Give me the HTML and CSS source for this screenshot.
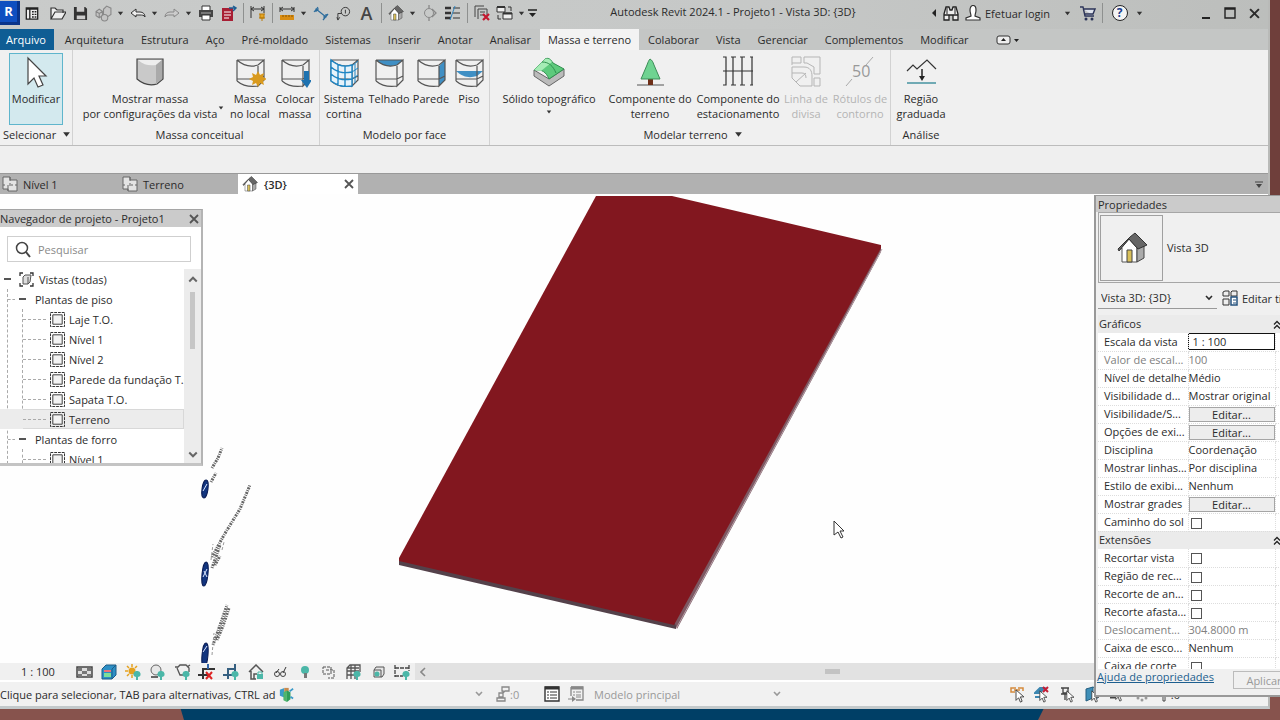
FILE: index.html
```html
<!DOCTYPE html>
<html lang="pt-BR">
<head>
<meta charset="utf-8">
<title>Autodesk Revit 2024.1 - Projeto1 - Vista 3D: {3D}</title>
<link rel="stylesheet" href="styles.css">
</head>
<body>
<svg width="0" height="0" class="defs" aria-hidden="true">
  <symbol id="caret" viewBox="0 0 8 8"><path d="M1 2h6L4 6z" fill="#333"/></symbol>
  <symbol id="chev" viewBox="0 0 8 8"><path d="M1 2l3 3 3-3" fill="none" stroke="currentColor" stroke-width="1.6"/></symbol>
  <symbol id="close" viewBox="0 0 10 10"><path d="M1 1l8 8M9 1L1 9" fill="none" stroke="currentColor" stroke-width="1.8"/></symbol>
  <symbol id="dblup" viewBox="0 0 8 8"><path d="M1 4l3-3 3 3M1 8l3-3 3 3" fill="none" stroke="#222" stroke-width="1.3"/></symbol>
  <symbol id="house" viewBox="0 0 32 32">
    <path d="M4 17L13 7l8 9v14H6V16z" fill="#fff" stroke="#555"/>
    <path d="M21 16l7-2v12l-7 4z" fill="#aaa" stroke="#444"/>
    <path d="M2 17L14 5l5-4 12 12-9 4-9-10L3 19z" fill="#666" stroke="#333"/>
    <path d="M11 18h5v12h-5z" fill="#d9c05a" stroke="#444"/>
  </symbol>
  <symbol id="plan" viewBox="0 0 16 16">
    <path d="M.5 .5h15v15H.5z" fill="none" stroke="#222" stroke-dasharray="3 1"/>
    <path d="M3 3h10v10H3z" fill="#f4f4f4" stroke="#333"/>
  </symbol>
  <symbol id="sheet" viewBox="0 0 16 16">
    <path d="M1 1h7v3h7v11H6v-2H1z" fill="#e4e4e4" stroke="#666"/>
    <path d="M8 1v4M8 7v3M1 9h2M6 9v6M9 9h2M13 9h2" fill="none" stroke="#666"/>
  </symbol>
  <symbol id="ptr" viewBox="0 0 10 16"><path d="M1 1v12l3-3 2 5 2-1-2-5h4z" fill="#fff" stroke="#333"/></symbol>
  <symbol id="mass" viewBox="0 0 32 32">
    <path d="M3 4h27M3 4v21M3 4c8 7 15 7 21 5l6-5v20l-6 6V10M3 25c7 6 14 6 21 5M3 23h21l6-3" fill="none" stroke="#555" stroke-width="1.2"/>
  </symbol>
</svg>

<svg class="desktop" viewBox="0 0 1280 720" preserveAspectRatio="none" aria-hidden="true">
  <path d="M0 0h1280v720H0z" fill="#87534d"/><path d="M1260 0h20v200h-20z" fill="#6f3f3b"/>
  <path d="M178 700h870l-10 20H184z" fill="#003f66"/>
</svg>

<div class="app">
  <header class="titlebar">
    <button class="logo" aria-label="Revit">R</button>
    <button class="tool first" aria-label="Início"><svg width="14" height="15" viewBox="0 0 16 16"><path d="M1.500 1.500h13v13h-13zM1 3h14M5.500 3v12" fill="#eee" stroke="#222" stroke-width="1.500"/><path d="M8 6h2M11 6h2M8 9h2M11 9h2M8 12h2M11 12h2" stroke="#222" stroke-width="1.500"/></svg></button>
    <button class="tool" aria-label="Abrir"><svg width="16" height="16" viewBox="0 0 16 16"><path d="M1 14V3h4l2 2h6v3M1 14L5 7h11l-4 7z" fill="#eee" stroke="#333" stroke-width="1.200"/></svg></button>
    <button class="tool" aria-label="Salvar"><svg width="15" height="15" viewBox="0 0 16 16"><path d="M1 1h12l2 2v12H1z" fill="#333"/><path d="M4 1h8v5H4zM4 10h9v4H4z" fill="#ccc"/></svg></button>
    <button class="tool" aria-label="Sincronizar"><svg width="17" height="17" viewBox="0 0 16 16"><g fill="#c4c4c4" stroke="#888"><path d="M1 6l3-2 3 2v4l-3 2-3-2zM1 6l3 2 3-2M4 8v4"/><path d="M8 4l3-3 4 2v6l-3 2-4-2z"/><circle cx="9" cy="12" r="3"/></g></svg></button>
    <button class="more" aria-label="Mais"><svg width="7" height="7"><use href="#caret"/></svg></button>
    <button class="tool" aria-label="Desfazer"><svg width="16" height="16" viewBox="0 0 16 16"><path d="M1 8l5-4v3h4c3 0 5 2 5 5-1-2-3-2-5-2H6v2z" fill="#eee" stroke="#333"/></svg></button>
    <button class="more" aria-label="Mais"><svg width="7" height="7"><use href="#caret"/></svg></button>
    <button class="tool" aria-label="Refazer"><svg width="16" height="16" viewBox="0 0 16 16"><path d="M15 8l-5-4v3H6c-3 0-5 2-5 5 1-2 3-2 5-2h4v2z" fill="#ccc" stroke="#888"/></svg></button>
    <button class="more" aria-label="Mais"><svg width="7" height="7"><use href="#caret"/></svg></button>
    <button class="tool" aria-label="Imprimir"><svg width="16" height="16" viewBox="0 0 16 16"><path d="M4 5V1h8v4" fill="#fff" stroke="#333"/><path d="M1 5h14v7H1z" fill="#444"/><path d="M3 8h10" stroke="#aaa"/><path d="M4 10h8v5H4z" fill="#fff" stroke="#333"/></svg></button>
    <button class="tool" aria-label="Exportar PDF"><svg width="16" height="16" viewBox="0 0 16 16"><path d="M1 3h11v13H1z" fill="#a81e34"/><path d="M3 7h7M3 10h7M3 13h5" stroke="#fff"/><path d="M8 3h6M12 1l3 2-3 3" fill="none" stroke="#1d5e94" stroke-width="1.500"/></svg></button>
    <span class="sep"></span>
    <button class="tool" aria-label="Cota"><svg width="16" height="16" viewBox="0 0 16 16"><path d="M1 1v12M14 1v7M1 4h13M4 2L1 4l3 2M11 2l3 2-3 2" fill="none" stroke="#333"/><path d="M9 9h6M10 9v4h4V9M12 13v3M9 13h6" fill="#e6a623" stroke="#b97a08"/></svg></button>
    <span class="sep"></span>
    <button class="tool" aria-label="Medir"><svg width="16" height="16" viewBox="0 0 16 16"><path d="M1 2v5M15 2v5M1 4h14M4 2L1 4l3 2M12 2l3 2-3 2" fill="none" stroke="#333"/><path d="M1 10h14v5H1z" fill="#d98d12"/><path d="M4 10v2M7 10v2M10 10v2M13 10v2" stroke="#8a5600"/></svg></button>
    <button class="more" aria-label="Mais"><svg width="7" height="7"><use href="#caret"/></svg></button>
    <button class="tool" aria-label="Cota alinhada"><svg width="16" height="16" viewBox="0 0 16 16"><path d="M3 4l10 8M1 7l4-5M10 15l5-6M3 7V4h3M10 12h3V9" fill="none" stroke="#2c6c9c" stroke-width="1.200"/></svg></button>
    <button class="tool" aria-label="Identificador"><svg width="15" height="15" viewBox="0 0 16 16"><circle cx="10" cy="6" r="4.500" fill="none" stroke="#333"/><path d="M10 4v4M6 8H2v6M1 12l1 3 2-3" fill="none" stroke="#333"/></svg></button>
    <button class="tool letter" aria-label="Texto">A</button>
    <span class="sep"></span>
    <button class="tool" aria-label="Vista 3D"><svg width="16" height="16"><use href="#house"/></svg></button>
    <button class="more" aria-label="Mais"><svg width="7" height="7"><use href="#caret"/></svg></button>
    <button class="tool" aria-label="Corte"><svg width="14" height="16" viewBox="0 0 14 16"><circle cx="6" cy="8" r="4.500" fill="none" stroke="#888"/><path d="M6 0v3M6 13v3M9 4l4 4-4 4" fill="none" stroke="#888" stroke-width="1.300"/></svg></button>
    <button class="tool" aria-label="Linhas finas"><svg width="17" height="16" viewBox="0 0 17 16"><path d="M1 3h6M1 8h6M1 13h6" stroke="#333" stroke-width="2.500"/><path d="M9 3h7M9 8h7M9 13h7" stroke="#333"/><path d="M11 1L6 15" stroke="#2f83bd"/></svg></button>
    <span class="sep"></span>
    <button class="tool" aria-label="Fechar ocultas"><svg width="16" height="16" viewBox="0 0 16 16"><path d="M1 12V1h9M4 14V4h9v6M6 7h5M6 10h4" fill="none" stroke="#444"/><path d="M9 9l6 6M15 9l-6 6" stroke="#c3182f" stroke-width="2.200"/></svg></button>
    <button class="tool" aria-label="Alternar janelas"><svg width="17" height="16" viewBox="0 0 17 16"><path d="M1 2h8v5H1zM7 8h9v6H7z" fill="#eee" stroke="#333"/><path d="M1 2h8M7 8.500h9" stroke="#333" stroke-width="2"/><path d="M12 2h3v4M2 10v4h3" fill="none" stroke="#333"/></svg></button>
    <button class="more" aria-label="Mais"><svg width="7" height="7"><use href="#caret"/></svg></button>
    <button class="more" aria-label="Personalizar"><svg width="9" height="8" viewBox="0 0 9 8"><path d="M0 1h9" stroke="#222" stroke-width="1.500"/><path d="M1 4h7L4.500 8z" fill="#222"/></svg></button>
    <h1>Autodesk Revit 2024.1 - Projeto1 - Vista 3D: {3D}</h1>
    <div class="account">
      <button class="more" aria-label="Recolher"><svg width="6" height="8" viewBox="0 0 6 8"><path d="M5 0v8L1 4z" fill="#222"/></svg></button>
      <button class="tool" aria-label="Pesquisar"><svg width="16" height="16" viewBox="0 0 16 16"><path d="M1 9l2-7h3l1 3h2l1-3h3l2 7v6h-5v-5H6v5H1zM1 10h5M10 10h5" fill="#eee" stroke="#222" stroke-width="1.300"/><path d="M4 3v6M12 3v6" stroke="#222"/></svg></button>
      <button class="login"><svg width="16" height="16" viewBox="0 0 16 16"><path d="M5 5c0-6 6-6 6 0 0 3-1 4-1 6l5 2v2H1v-2l5-2C6 9 5 8 5 5z" fill="#fff" stroke="#333" stroke-width="1.200"/></svg>Efetuar login</button>
      <button class="more gap" aria-label="Mais"><svg width="7" height="7"><use href="#caret"/></svg></button>
      <button class="tool" aria-label="Loja"><svg width="16" height="16" viewBox="0 0 16 16"><path d="M0 2h3l2 9h9M4 4h11l-2 5H5" fill="#dfe3ee" stroke="#2b3357" stroke-width="1.400"/><circle cx="6" cy="14" r="1.500" fill="#2b3357"/><circle cx="12" cy="14" r="1.500" fill="#2b3357"/></svg></button>
      <span class="sep"></span>
      <button class="tool help" aria-label="Ajuda"><span>?</span></button>
      <button class="more" aria-label="Mais"><svg width="7" height="7"><use href="#caret"/></svg></button>
    </div>
    <div class="wincontrols">
      <button aria-label="Minimizar"><svg width="12" height="12" viewBox="0 0 12 12"><path d="M2 11h8" stroke="#222" stroke-width="2"/></svg></button>
      <button aria-label="Maximizar"><svg width="12" height="12" viewBox="0 0 12 12"><path d="M1 1h10v10H1zM1 2h10" fill="none" stroke="#222" stroke-width="1.400"/></svg></button>
      <button aria-label="Fechar"><svg width="11" height="11"><use href="#close"/></svg></button>
    </div>
  </header>

  <nav class="tabs">
    <button class="file">Arquivo</button>
    <button>Arquitetura</button><button>Estrutura</button><button>Aço</button><button>Pré-moldado</button><button>Sistemas</button><button>Inserir</button><button>Anotar</button><button>Analisar</button>
    <button class="active">Massa e terreno</button>
    <button>Colaborar</button><button>Vista</button><button>Gerenciar</button><button>Complementos</button><button>Modificar</button>
    <button class="toggle" aria-label="Minimizar faixa"><svg width="24" height="10" viewBox="0 0 24 10"><rect x="1" y="1" width="13" height="8" rx="2" fill="#eee" stroke="#333"/><path d="M5 6h5L7.500 3zM18 4h5l-2.500 3z" fill="#222"/></svg></button>
  </nav>

  <section class="ribbon">
    <div class="panel p-select">
      <div class="cmds"><button class="cmd on"><svg width="32" height="32" viewBox="0 0 32 32"><path d="M8 2v26l6-6 4 9 5-2-4-9h7z" fill="#fff" stroke="#444" stroke-width="1.200"/></svg><span>Modificar</span></button></div>
      <div class="name">Selecionar <svg width="9" height="9"><use href="#caret"/></svg></div>
    </div>
    <div class="panel p-mass">
      <div class="cmds">
        <button class="cmd"><svg width="32" height="32" viewBox="0 0 32 32"><path d="M3 3h26v20l-6 5c-7 2-13 1-20-5z" fill="#c9c9c9" stroke="#444" stroke-width="1.200"/><path d="M4 4h24l-6 5c-7 1-12 0-18-5z" fill="#eee"/><path d="M22 9v19l6-5V4z" fill="#aaa"/></svg><span>Mostrar massa<br>por configurações da vista</span><svg class="drop" width="6" height="6"><use href="#caret"/></svg></button>
        <button class="cmd"><svg width="32" height="32" viewBox="0 0 32 32"><use href="#mass" width="32" height="32"/><path d="M24 15l2 4 4-2-1 4 4 2-4 2 1 4-4-2-2 4-2-4-4 2 1-4-4-2 4-2-1-4 4 2z" fill="#d99a1e"/></svg><span>Massa<br>no local</span></button>
        <button class="cmd"><svg width="32" height="32" viewBox="0 0 32 32"><use href="#mass" width="32" height="32"/><path d="M25 15h5v9h3l-5 8-6-8h3z" fill="#1d72b0"/></svg><span>Colocar<br>massa</span></button>
      </div>
      <div class="name">Massa conceitual</div>
    </div>
    <div class="panel p-face">
      <div class="cmds">
        <button class="cmd"><svg width="32" height="32" viewBox="0 0 32 32"><use href="#mass" width="32" height="32"/><path d="M3 4c8 7 15 7 21 5v21c-9 1-14 0-21-5zM3 11c8 7 15 6 21 5M3 18c8 7 15 6 21 5M10 8v21M17 10v20" fill="#e6f3fb" stroke="#1e86c4" stroke-width="1.400"/><path d="M24 10l6-5M24 16l6-4M24 23l6-4M27 8v19" stroke="#1e86c4"/></svg><span>Sistema<br>cortina</span></button>
        <button class="cmd"><svg width="32" height="32" viewBox="0 0 32 32"><path d="M3 4h27l-6 5c-7 2-13 2-21-5z" fill="#3f8fc4"/><use href="#mass" width="32" height="32"/></svg><span>Telhado</span></button>
        <button class="cmd"><svg width="32" height="32" viewBox="0 0 32 32"><path d="M24 10l6-6v20l-6 6z" fill="#3f8fc4"/><use href="#mass" width="32" height="32"/></svg><span>Parede</span></button>
        <button class="cmd"><svg width="32" height="32" viewBox="0 0 32 32"><path d="M3 15h27l-6 5c-7 2-13 2-21-5z" fill="#3f8fc4"/><use href="#mass" width="32" height="32"/></svg><span>Piso</span></button>
      </div>
      <div class="name">Modelo por face</div>
    </div>
    <div class="panel p-site">
      <div class="cmds">
        <button class="cmd"><svg width="32" height="32" viewBox="0 0 32 32"><path d="M1 14l15 9 15-10v7L16 30 1 20z" fill="#bbb" stroke="#666"/><path d="M1 14L12 3c4-2 6 1 8 4l11 6-15 10c-3-7-7-10-15-9z" fill="#5dca7c" stroke="#2f8f4e"/><path d="M1 14L12 3c3-1 5 0 7 3L8 15z" fill="#a5ecb5"/><path d="M9 6c7 0 11 4 14 11" fill="none" stroke="#2f8f4e"/></svg><span>Sólido topográfico</span><svg class="under" width="6" height="6"><use href="#caret"/></svg></button>
        <button class="cmd"><svg width="32" height="32" viewBox="0 0 32 32"><path d="M3 29h27" stroke="#555"/><path d="M14 22h5v7h-5z" fill="#6e2f18"/><path d="M16 3c2 1 3 3 4 6l6 14H7l6-14c1-3 2-5 3-6z" fill="#6fd391" stroke="#3d8d58"/></svg><span>Componente do<br>terreno</span></button>
        <button class="cmd"><svg width="32" height="32" viewBox="0 0 32 32"><path d="M1 15h30M1 1h3v28H1M9 1h5M11 1v28M9 29h5M18 1h5M20 1v28M18 29h5M31 1h-3M31 29h-3M30 1v28" fill="none" stroke="#333" stroke-width="1.200"/></svg><span>Componente do<br>estacionamento</span></button>
        <button class="cmd" disabled><svg width="32" height="32" viewBox="0 0 32 32"><path d="M2 9V1h9v6H2M14 1h16v17h-6V11L17 7h-3zM2 11h12c6 0 8 4 8 9v10H10L2 22zM2 17h10c3 0 4 2 4 5M6 26l10-9M24 22h6v8h-6z" fill="none" stroke="#b5b5b5"/></svg><span>Linha de<br>divisa</span></button>
        <button class="cmd" disabled><svg width="32" height="32" viewBox="0 0 32 32"><path d="M2 30l6-7M22 9l7-8" stroke="#aaa"/><text x="8" y="21" class="fifty">50</text></svg><span>Rótulos de<br>contorno</span></button>
      </div>
      <div class="name">Modelar terreno <svg width="9" height="9"><use href="#caret"/></svg></div>
    </div>
    <div class="panel p-analysis">
      <div class="cmds"><button class="cmd"><svg width="32" height="32" viewBox="0 0 32 32"><path d="M2 15l6-6 4 4L22 4l9 9" fill="none" stroke="#333" stroke-width="1.200"/><path d="M17 13v9" stroke="#222" stroke-width="1.500"/><path d="M14 20h6l-3 5z" fill="#222"/><path d="M2 27h29" stroke="#2b8494" stroke-width="1.300"/></svg><span>Região<br>graduada</span></button></div>
      <div class="name">Análise</div>
    </div>
  </section>

  <div class="options"></div>

  <div class="viewtabs">
    <button><svg width="16" height="16"><use href="#sheet"/></svg>Nível 1</button>
    <button><svg width="16" height="16"><use href="#sheet"/></svg>Terreno</button>
    <button class="active"><svg width="16" height="16"><use href="#house"/></svg>{3D}<svg class="x" width="10" height="10"><use href="#close"/></svg></button>
    <span class="listmenu"><svg width="8" height="7" viewBox="0 0 8 7"><path d="M0 1h8" stroke="#444"/><path d="M1 3h6L4 7z" fill="#444"/></svg></span>
  </div>

  <main class="canvas">
    <svg width="1095" height="469" viewBox="0 194 1095 469">
      <path d="M399 558L676 622v7L399 565z" fill="#54414a"/>
      <path d="M881 245v7L677 629l-3-8z" fill="#7d5862"/>
      <path d="M882 249L677 627" stroke="#b6a0a8" stroke-width="1"/>
      <path d="M596 196h76L881 245v3L674 625 399 561v-3z" fill="#82171f"/>
      <g fill="#12357f" stroke="#0a1c55">
        <ellipse cx="205" cy="489" rx="3" ry="9" transform="rotate(8 205 489)"/>
        <ellipse cx="205" cy="574" rx="3" ry="12" transform="rotate(6 205 574)"/>
        <ellipse cx="205" cy="655" rx="3" ry="12" transform="rotate(5 205 655)"/>
      </g>
      <path d="M203 491l4-7M203 577l4-8M204 571l3 6M203 652l4-6" stroke="#dfe8ff"/>
      <g fill="none" stroke="#666" stroke-width="3" stroke-dasharray="1 1 2 1">
        <path d="M212 468l6-10 4-10M211 482l5-9M212 557l12-22 16-26 10-24M212 568l5-14 3-9M215 565l5-9M213 645l5-14 9-26M217 640l6-14 6-18"/>
      </g>
      <path d="M211 560l2-16M212 655l2-22M222 550l2-8" stroke="#999" stroke-dasharray="3 2"/>
      <path d="M834 521v14l4-3 3 6 2-1-3-6h4z" fill="#fff" stroke="#333"/>
    </svg>
  </main>

  <div class="viewbar">
    <span class="scale">1 : 100</span>
    <div class="viewicons">
      <svg width="17" height="16" viewBox="0 0 17 16"><path d="M1 3h15v10H1z" fill="#ddd" stroke="#444" stroke-width="1.500"/><path d="M2 4h4v3H2zM11 4h4v3h-4zM6 7h5v3H6zM2 10h4v3H2zM11 10h4v3h-4z" fill="#777"/></svg>
      <svg width="16" height="16" viewBox="0 0 16 16"><path d="M1 5l4-4h10v10l-4 4H1z" fill="#2d8fc5" stroke="#1c5c87"/><path d="M3 6h7v2H3z" fill="#f07078"/><path d="M3 9h7v4H3z" fill="#7ddf9a"/><path d="M11 5l4-4M11 5v10" stroke="#1c5c87"/></svg>
      <svg width="17" height="16" viewBox="0 0 17 16"><circle cx="7" cy="7" r="3.500" fill="#e5a11e"/><path d="M7 0v3M7 11v3M0 7h3M2 2l2 2M12 2l-2 2M2 12l2-2" stroke="#e5a11e" stroke-width="1.500"/><path d="M12 7a3 3 0 0 1 1 6v3h-2v-3a3 3 0 0 1 1-6z" fill="#4bb7a8"/></svg>
      <svg width="17" height="16" viewBox="0 0 17 16"><circle cx="7" cy="6" r="5" fill="#e8e8e8" stroke="#666"/><path d="M2 13h7" stroke="#666" stroke-width="2"/><path d="M12 7a3 3 0 0 1 1 6v3h-2v-3a3 3 0 0 1 1-6z" fill="#4bb7a8"/></svg>
      <svg width="17" height="16" viewBox="0 0 17 16"><path d="M1 3h3l2-2h6l3 3v4M3 4l3 7h5M13 3l3-2" fill="none" stroke="#555" stroke-width="1.300"/><path d="M12 7a3 3 0 0 1 1 6v3h-2v-3a3 3 0 0 1 1-6z" fill="#4bb7a8"/></svg>
      <svg width="17" height="16" viewBox="0 0 17 16"><path d="M5 15V5h12M0 11h10" fill="none" stroke="#333" stroke-width="2"/><path d="M10 0v5" stroke="#36a" stroke-width="2"/><path d="M8 8l6 7M14 8l-6 7" stroke="#d22" stroke-width="2"/></svg>
      <svg width="17" height="16" viewBox="0 0 17 16"><path d="M5 15V5h8M0 11h9M12 0v12" fill="none" stroke="#355f80" stroke-width="2"/><path d="M12 7a3 3 0 0 1 1 6v3h-2v-3a3 3 0 0 1 1-6z" fill="#4bb7a8"/></svg>
      <svg width="16" height="16" viewBox="0 0 16 16"><path d="M1 8l7-7 7 7M3 7v8h5M6 15v-5h3" fill="none" stroke="#555" stroke-width="1.500"/><path d="M9 10h6v5H9z" fill="#4bb7a8"/><path d="M10 10V8h4v2" fill="none" stroke="#4bb7a8"/></svg>
      <svg width="15" height="14" viewBox="0 0 15 14"><path d="M6 4L3 8M13 2l-3 6" stroke="#333"/><circle cx="4" cy="9" r="2.500" fill="none" stroke="#444"/><circle cx="10" cy="9" r="2.500" fill="none" stroke="#444"/></svg>
      <svg width="10" height="14" viewBox="0 0 10 14"><circle cx="5" cy="5" r="4" fill="#4bb7a8"/><path d="M4 8h3v5H4z" fill="#777"/></svg>
      <svg width="14" height="14" viewBox="0 0 14 14"><path d="M1 2h8v7H1zM4 5h8v8H6" fill="none" stroke="#555" stroke-dasharray="3 1"/></svg>
      <svg width="17" height="16" viewBox="0 0 17 16"><path d="M2 15V4l3-3h10v7M2 7h12M2 11h8M6 1v14M10 1v14M2 4h12" fill="none" stroke="#555" stroke-width="1.300"/><path d="M12 7a3 3 0 0 1 1 6v3h-2v-3a3 3 0 0 1 1-6z" fill="#4bb7a8"/></svg>
      <svg width="14" height="14" viewBox="0 0 14 14"><path d="M3 5l2-3h8v7l-2 3H3zM10 5V12M3 5h7" fill="#e6e6e6" stroke="#555"/><circle cx="6" cy="9" r="2.500" fill="#4bb7a8"/></svg>
      <svg width="17" height="16" viewBox="0 0 17 16"><path d="M1 1v12M15 1v6M1 4h14M1 12h8" fill="none" stroke="#444" stroke-width="1.300" stroke-dasharray="4 1"/><path d="M12 7a3 3 0 0 1 1 6v3h-2v-3a3 3 0 0 1 1-6z" fill="#4bb7a8"/></svg>
    </div>
    <div class="hscroll"><svg width="6" height="10" viewBox="0 0 6 10"><path d="M5 1L1 5l4 4" fill="none" stroke="#888" stroke-width="1.600"/></svg><span class="hthumb"></span></div>
  </div>

  <footer class="status">
    <div class="prompt"><span>Clique para selecionar, TAB para alternativas, CTRL ad</span>
    <svg width="15" height="17" viewBox="0 0 17 17"><path d="M1 3l5-2v11l-5-2z" fill="#3c9bc9"/><path d="M6 1h5v6H6z" fill="#c98a4d"/><path d="M5 6l4-2v13l-4-2z" fill="#4fb56d"/><path d="M9 4l4 2v8l-4 3z" fill="#2f9e59"/><path d="M12 5l4-3M13 11l3 2" stroke="#3c9bc9" stroke-width="2"/></svg></div>
    <label class="pick ws"><select aria-label="Workset ativo"><option></option></select><svg width="8" height="8"><use href="#chev"/></svg></label>
    <svg class="req" width="14" height="16" viewBox="0 0 14 16"><path d="M6 1h7v4H9L7 7V5H6zM3 7h4v4H3zM1 15v-3h8v3z" fill="none" stroke="#888" stroke-width="1.300"/></svg><span class="grey">:0</span>
    <svg class="doc" width="16" height="16" viewBox="0 0 16 16"><path d="M1 1h14v14H1z" fill="#fff" stroke="#333" stroke-width="1.400"/><path d="M1 2h14" stroke="#333" stroke-width="3"/><path d="M3 6h2M3 9h2M3 12h2M6 6h7M6 9h7M6 12h7" stroke="#333"/></svg>
    <svg class="doc2" width="16" height="16" viewBox="0 0 16 16"><path d="M3 1h12v13H8M3 1v9" fill="none" stroke="#888" stroke-width="1.300"/><path d="M3 2h12" stroke="#888" stroke-width="3"/><path d="M5 6h2M8 6h5M5 9h2M8 9h5M8 11h5M0 13h5" stroke="#888"/><path d="M4 10v6l4-3z" fill="#888"/></svg>
    <label class="pick model"><select aria-label="Opção de projeto"><option>Modelo principal</option></select><svg width="8" height="8"><use href="#chev"/></svg></label>
    <div class="selection">
      <svg width="16" height="18" viewBox="0 0 16 18"><path d="M7 3H2v4h4M9 3h5v3M5 5h6" fill="none" stroke="#d58a3c" stroke-width="1.500"/><use href="#ptr" x="6" y="4" width="9" height="14"/></svg>
      <svg width="16" height="18" viewBox="0 0 16 18"><path d="M1 8l5-5h4L6 8zM1 12h6" fill="#3c86b0" stroke="#3c86b0" stroke-width="2"/><path d="M9 2l5 5M14 2L9 7" stroke="#c41e35" stroke-width="2"/><use href="#ptr" x="5" y="5" width="8" height="13"/></svg>
      <svg width="16" height="18" viewBox="0 0 16 18"><path d="M2 3h8M4 3v5h5V3M2 9h8M6 9v6" fill="none" stroke="#444" stroke-width="1.300"/><use href="#ptr" x="7" y="5" width="8" height="13"/></svg>
      <svg width="16" height="18" viewBox="0 0 16 18"><path d="M2 4l7-2v11l-7 3z" fill="#3f8fb8" stroke="#245f80"/><path d="M9 2l4 2v10" fill="none" stroke="#245f80"/><use href="#ptr" x="7" y="5" width="8" height="13"/></svg>
      <svg width="16" height="18" viewBox="0 0 16 18"><path d="M1 12h7" stroke="#444" stroke-width="3"/><use href="#ptr" x="6" y="4" width="8" height="13"/></svg>
      <svg width="16" height="18" viewBox="0 0 16 18"><circle cx="4" cy="13" r="1.500" fill="#999"/><circle cx="8" cy="15" r="1.500" fill="#999"/><circle cx="12" cy="13" r="1.500" fill="#999"/></svg>
      <svg width="10" height="18" viewBox="0 0 10 18"><path d="M2 3h6L6 8v8H4V8z" fill="#fff" stroke="#444"/></svg><span>:0</span>
    </div>
  </footer>
</div>

<aside class="browser">
  <div class="phead">Navegador de projeto - Projeto1<button aria-label="Fechar"><svg width="10" height="10"><use href="#close"/></svg></button></div>
  <label class="search"><svg width="16" height="17" viewBox="0 0 16 17"><circle cx="7" cy="7" r="5.500" fill="none" stroke="#444" stroke-width="1.500"/><path d="M11 11l4 5" stroke="#444" stroke-width="2"/></svg><input type="text" placeholder="Pesquisar" aria-label="Pesquisar"></label>
  <div class="treewrap">
    <div class="tree">
      <div class="row root"><i></i><svg width="15" height="15" viewBox="0 0 15 15"><path d="M1 4V1h3M11 1h3v3M1 11v3h3M11 14h3v-3" fill="none" stroke="#333" stroke-width="1.300"/><path d="M4 5l2-2h6l-1 7-2 2H4zM9 5v7" fill="#ddd" stroke="#555"/></svg>Vistas (todas)</div>
      <ul>
        <li class="row branch"><i></i>Plantas de piso</li>
        <li><ul>
          <li class="row leaf"><svg width="15" height="15"><use href="#plan"/></svg>Laje T.O.</li>
          <li class="row leaf"><svg width="15" height="15"><use href="#plan"/></svg>Nível 1</li>
          <li class="row leaf"><svg width="15" height="15"><use href="#plan"/></svg>Nível 2</li>
          <li class="row leaf"><svg width="15" height="15"><use href="#plan"/></svg>Parede da fundação T.O.</li>
          <li class="row leaf"><svg width="15" height="15"><use href="#plan"/></svg>Sapata T.O.</li>
          <li class="row leaf sel"><svg width="15" height="15"><use href="#plan"/></svg>Terreno</li>
        </ul></li>
        <li class="row branch"><i></i>Plantas de forro</li>
        <li><ul><li class="row leaf"><svg width="15" height="15"><use href="#plan"/></svg>Nível 1</li></ul></li>
      </ul>
    </div>
    <div class="vscroll"><svg class="up" width="10" height="10"><use href="#chev"/></svg><span></span><svg width="10" height="10"><use href="#chev"/></svg></div>
  </div>
</aside>

<aside class="props">
  <div class="phead">Propriedades</div>
  <div class="type"><div class="thumb"><svg width="32" height="32"><use href="#house"/></svg></div>Vista 3D</div>
  <div class="combo">
    <label><select aria-label="Tipo de vista"><option>Vista 3D: {3D}</option></select><svg width="8" height="8"><use href="#chev"/></svg></label>
    <button><svg width="16" height="16" viewBox="0 0 16 16"><path d="M1 2l2-1h4v5H1zM9 2l1-1h5v5H9zM1 9h6v6H1z" fill="#eee" stroke="#333"/><path d="M9 7h6v8H9z" fill="#fff" stroke="#24517d" stroke-width="1.500"/><path d="M11 10h3M11 13h3" stroke="#24517d"/></svg>Editar tipo</button>
  </div>
  <div class="grid">
    <table>
      <colgroup><col class="c-name"><col class="c-value"><col></colgroup>
      <tr class="group"><th colspan="3">Gráficos<svg width="8" height="9"><use href="#dblup"/></svg></th></tr>
      <tr><th>Escala da vista</th><td><input class="val" value="1 : 100" aria-label="Escala da vista"></td><td></td></tr>
      <tr class="off"><th>Valor de escal...</th><td>100</td><td></td></tr>
      <tr><th>Nível de detalhe</th><td>Médio</td><td></td></tr>
      <tr><th>Visibilidade d...</th><td>Mostrar original</td><td></td></tr>
      <tr><th>Visibilidade/S...</th><td><button>Editar...</button></td><td></td></tr>
      <tr><th>Opções de exi...</th><td><button>Editar...</button></td><td></td></tr>
      <tr><th>Disciplina</th><td>Coordenação</td><td></td></tr>
      <tr><th>Mostrar linhas...</th><td>Por disciplina</td><td></td></tr>
      <tr><th>Estilo de exibi...</th><td>Nenhum</td><td></td></tr>
      <tr><th>Mostrar grades</th><td><button>Editar...</button></td><td></td></tr>
      <tr><th><label for="c1">Caminho do sol</label></th><td><input type="checkbox" id="c1"></td><td></td></tr>
      <tr class="group"><th colspan="3">Extensões<svg width="8" height="9"><use href="#dblup"/></svg></th></tr>
      <tr><th><label for="c2">Recortar vista</label></th><td><input type="checkbox" id="c2"></td><td></td></tr>
      <tr><th><label for="c3">Região de rec...</label></th><td><input type="checkbox" id="c3"></td><td></td></tr>
      <tr><th><label for="c4">Recorte de an...</label></th><td><input type="checkbox" id="c4"></td><td></td></tr>
      <tr><th><label for="c5">Recorte afasta...</label></th><td><input type="checkbox" id="c5"></td><td></td></tr>
      <tr class="off"><th>Deslocament...</th><td>304.8000 m</td><td></td></tr>
      <tr><th>Caixa de esco...</th><td>Nenhum</td><td></td></tr>
      <tr><th><label for="c6">Caixa de corte</label></th><td><input type="checkbox" id="c6"></td><td></td></tr>
    </table>
  </div>
  <div class="foot"><a href="#ajuda">Ajuda de propriedades</a><button disabled>Aplicar</button></div>
</aside>
</body>
</html>
```
FILE: styles.css
```css
* { box-sizing: border-box; }
body { margin: 0; height: 100vh; overflow: hidden; position: relative; font: 11px/15px "Open Sans", "Noto Sans", sans-serif; color: #2b2b2b; }
button, input, select { font: inherit; color: inherit; margin: 0; }
button { border: 0; background: none; padding: 0; white-space: nowrap; }
svg { flex: none; display: block; }
.defs { position: absolute; }
.desktop { position: absolute; inset: 0; width: 100%; height: 100%; }

.app { position: relative; display: flex; flex-direction: column; height: calc(100vh - 11px); margin-right: 10px; background: #c4c6c5; border-right: 2px solid #b9bab8; border-bottom: 3px solid #c3c9cb; }

.titlebar { display: flex; align-items: center; height: 29px; padding-bottom: 3px; background: linear-gradient(90deg, #c9cbca, #c6c8c7 60%, #bcbebc); flex: none; }
.titlebar button, .sep { display: flex; align-items: center; justify-content: center; height: 20px; flex: none; }
.titlebar .logo { width: 20px; height: 24px; background: #0f4fc0; border-right: 3px solid #0a348a; border-bottom: 3px solid #0a348a; color: #fff; font-size: 13px; font-weight: 700; }
.tool { width: 23px; }
.first { margin-right: 3px; }
.letter { font-size: 18px; font-weight: 600; color: #444; }
.more { width: 11px; }
.sep { width: 6px; }
.sep::before { content: ""; width: 1px; height: 20px; background: #8e908f; }
.titlebar h1 { flex: 1; margin: 0; font-size: 11px; font-weight: 400; text-align: center; padding-bottom: 3px; white-space: nowrap; }
.account { display: flex; align-items: center; }
.titlebar .login { gap: 4px; width: 100px; justify-content: flex-start; padding-left: 3px; }
.account .gap { margin-right: 3px; }
.account .help { width: 29px; }
.help span { width: 16px; height: 16px; border: 1px solid #222; border-radius: 50%; background: #f4f4f4; color: #1a3d8c; font-weight: 700; line-height: 14px; text-align: center; font-size: 12px; }
.wincontrols { display: flex; margin-left: 49px; padding-right: 2px; }
.wincontrols button { width: 24px; }

.tabs { display: flex; height: 21px; background: #c4c6c5; flex: none; }
.tabs button { padding: 0 9px 0 8px; height: 21px; }
.tabs .file { background: #0f5d94; color: #fff; padding: 0 8px 0 6px; margin-right: 3px; }
.tabs .active { background: #f3f3f3; padding: 0 8px; margin-right: 1px; }
.tabs .toggle { padding-left: 18px; }

.ribbon { display: flex; height: 96px; flex: none; background: #f0f0f0; border-bottom: 1px solid #bcbcbc; }
.panel { display: flex; flex-direction: column; justify-content: space-between; border-right: 1px solid #d2d2d2; padding: 3px; }
.cmds { display: grid; height: 72px; justify-items: center; }
.cmd { display: flex; flex-direction: column; align-items: center; justify-content: flex-start; gap: 3px; padding-top: 3px; text-align: center; position: relative; height: 72px; }
.cmd:disabled { color: #b4b4b4; }
.fifty { font-size: 16px; fill: #999; }
.cmd .drop { position: absolute; right: -7px; top: 52px; }
.on { background: #d3e9ee; border: 1px solid #5fb5cc; width: 54px; padding-top: 2px; }
.name { text-align: center; white-space: nowrap; line-height: 14px; }
.name svg { display: inline-block; margin-left: 3px; }
.p-select { width: 73px; }
.p-select .cmds { padding-left: 0; }
.p-select .name { text-align: left; }
.p-mass { width: 247px; padding-left: 10px; }
.p-mass .cmds { grid-template-columns: 134px 66px 24px; }
.p-face { width: 170px; padding-left: 0; padding-right: 0; }
.p-face .cmds { grid-template-columns: 48px 42px 42px 34px; }
.p-site { width: 401px; padding-left: 9px; }
.p-site .cmds { grid-template-columns: 100px 102px 74px 62px 46px; }
.p-analysis { width: 60px; border: 0; }

.options { height: 27px; flex: none; background: #efefef; }

.viewtabs { display: flex; height: 21px; flex: none; background: #b1b1b1; border-top: 1px solid #999; align-items: stretch; }
.viewtabs button { display: flex; align-items: center; gap: 5px; width: 120px; padding: 0 4px; }
.viewtabs button:first-child { width: 118px; padding-left: 2px; }
.viewtabs .active { background: #fff; font-weight: 600; gap: 6px; }
.viewtabs .x { margin-left: auto; color: #555; }
.listmenu { margin-left: auto; padding: 7px 5px; }

.canvas { flex: 1; min-height: 0; overflow: hidden; background: #fefefe; }

.viewbar { display: flex; height: 17px; flex: none; background: #f0f0f0; align-items: center; }
.scale { width: 72px; padding-left: 21px; }
.viewicons { display: grid; grid-template-columns: repeat(14, 1fr); width: 343px; justify-items: center; align-items: center; }
.hscroll { flex: 1; align-self: stretch; display: flex; align-items: center; background: #e2e2e2; padding-left: 5px; }
.hthumb { width: 15px; height: 5px; background: #c3c3c3; margin-left: 47%; }

.status { display: flex; align-items: center; height: 26px; flex: none; background: #f1f1f1; border-top: 2px solid #fff; }
.prompt { display: flex; align-items: center; gap: 3px; white-space: nowrap; width: 296px; }
.pick { position: relative; display: flex; align-items: center; color: #999; }
.pick select, .combo select { appearance: none; border: 0; background: none; width: 100%; padding: 0; }
.pick svg, .combo label svg { margin-left: -9px; pointer-events: none; }
.ws { width: 188px; }
.req { margin-left: 12px; }
.grey { color: #999; width: 34px; }
.doc2 { margin-left: 8px; margin-right: 10px; }
.model { width: 188px; }
.selection { display: flex; align-items: center; gap: 9px; margin-left: auto; padding-right: 88px; }
.selection span { margin-left: -7px; }

/* floating palettes */
.browser { position: absolute; left: 0; top: 209px; width: 203px; background: #fff; border: 1px solid #a5a5a5; border-left: 0; border-right: 2px solid #b4b4b4; border-bottom: 3px solid #c4c4c4; }
.phead { display: flex; justify-content: space-between; align-items: center; background: #cbcbcb; height: 17px; padding-right: 2px; white-space: nowrap; }
.phead button { color: #555; }
.search { display: flex; align-items: center; gap: 7px; height: 26px; margin: 9px 10px 7px 7px; border: 1px solid #cfcfcf; padding-left: 7px; }
.search input { border: 0; outline: 0; background: none; width: 140px; padding: 0; }
.search input::placeholder { color: #8a8a8a; }
.treewrap { display: flex; height: 194px; overflow: hidden; }
.tree { flex: 1; min-width: 0; overflow: hidden; }
.tree ul { list-style: none; margin: 0; padding: 0; }
.tree > ul { margin-left: 7px; border-left: 1px dashed #aaa; }
.tree ul ul { margin-left: 14px; border-left: 1px dashed #aaa; }
.row { display: flex; align-items: center; height: 20px; white-space: nowrap; gap: 4px; }
.row i { width: 7px; height: 2px; background: #555; flex: none; }
.root { padding-left: 4px; gap: 8px; }
.root svg { margin-right: -3px; }
.branch::before { content: ""; width: 7px; border-top: 1px dashed #aaa; }
.branch i { margin-right: 5px; }
.leaf::before { content: ""; width: 23px; border-top: 1px dashed #aaa; flex: none; }
.sel { background: #ececec; border: 1px solid #d8d8d8; border-left: 0; box-shadow: -24px 0 #ececec; }
.vscroll { width: 17px; background: #ececec; display: flex; flex-direction: column; align-items: center; color: #666; padding: 5px 0 3px; }
.vscroll .up { transform: rotate(180deg); }
.vscroll span { width: 5px; height: 57px; background: #c6c6c6; margin: 8px 0 auto; }

.props { position: absolute; left: calc(100% - 186px); top: 195px; width: 201px; background: #f0f0f0; border: 1px solid #999; border-width: 1px 0 2px 2px; }
.props .phead { padding-left: 2px; height: 16px; }
.type { display: flex; align-items: center; gap: 4px; height: 71px; border: 1px solid #a6a6a6; margin: 0 0 4px 2px; padding: 1px; }
.thumb { width: 63px; height: 66px; border: 1px solid #a0a0a0; display: grid; place-items: center; }
.combo { display: flex; gap: 5px; height: 22px; margin-left: 2px; }
.combo label { display: flex; align-items: center; width: 120px; border-bottom: 1px solid #999; padding: 0 3px; }
.combo button { display: flex; align-items: center; gap: 4px; }
.grid { margin-top: 6px; margin-left: 2px; height: 354px; overflow: hidden; }
.grid table { table-layout: fixed; width: 100%; border-collapse: collapse; background: #fff; }
.c-name { width: 90px; }
.c-value { width: 87px; }
.grid tr { height: 18px; }
.grid th, .grid td { padding: 0; height: 18px; line-height: 16px; border-bottom: 1px dotted #ddd; border-right: 1px dotted #ddd; font-weight: 400; text-align: left; white-space: nowrap; }
.grid th { padding-left: 6px; }
.grid .group th { background: #ebebeb; border: 0; padding: 0 0 0 1px; }
.grid td:last-child { border-right: 0; }
.group svg { float: right; margin: 4px 14px 0 0; }
.off { color: #808080; }
.grid td button { display: block; width: 86px; height: 15px; line-height: 13px; border: 1px solid #a5a5a5; background: #ededed; }
.val { display: block; width: 87px; height: 17px; border: 1px solid #111; padding: 0 4px; margin-left: -1px; background: #fff; outline: 0; }
.grid input[type="checkbox"] { appearance: none; display: block; width: 11px; height: 11px; border: 1px solid #555; background: #fff; margin: 2px 0 0 2px; }
.foot { display: flex; justify-content: space-between; height: 26px; align-items: flex-start; padding-left: 1px; }
.foot a { color: #1d5f8f; text-decoration: underline; }
.foot button { width: 62px; height: 18px; border: 1px solid #bbb; color: #999; margin-top: 2px; }
```
